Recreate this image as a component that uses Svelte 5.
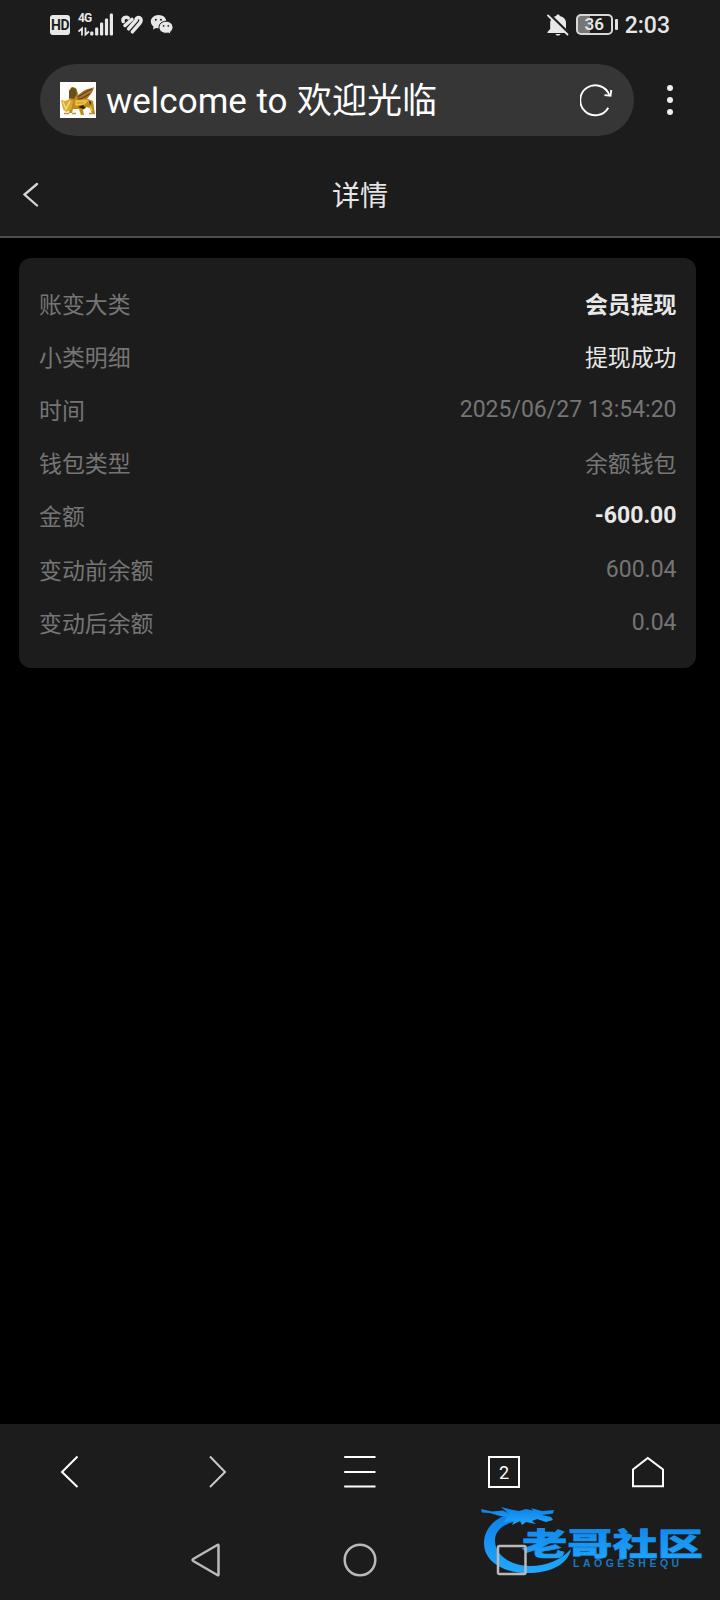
<script>
  const rows = [
    { label: '账变大类', value: '会员提现', type: 'strong' },
    { label: '小类明细', value: '提现成功', type: 'bright' },
    { label: '时间', value: '2025/06/27 13:54:20', type: 'num' },
    { label: '钱包类型', value: '余额钱包', type: '' },
    { label: '金额', value: '-600.00', type: 'strong num' },
    { label: '变动前余额', value: '600.04', type: 'num' },
    { label: '变动后余额', value: '0.04', type: 'num' }
  ];

  const signal = [4, 8, 13, 17, 22];
  let tabs = 2;
</script>

<div class="phone">
  <div class="status">
    <div class="status-left">
      <span class="hd">HD</span>
      <div class="signal">
        <span class="net">4G</span>
        <svg width="36" height="24" viewBox="0 0 36 24">
          <path d="M0.500 18.500L4 15.500V22.500M7.500 14.500V21.500L11 18.500" fill="none" stroke="#e8e8e8" stroke-width="1.800" />
          {#each signal as h, i}
            <rect x={12.2 + i * 4.9} y={22.5 - h} width="3.2" height={h} rx="1.2" fill="#e8e8e8" />
          {/each}
        </svg>
      </div>
      <svg class="health" width="24" height="22" viewBox="0 0 24 22">
        <g fill="none" stroke="#e8e8e8" stroke-width="3.500" stroke-linecap="round" stroke-linejoin="round">
          <path d="M3.200 7.500Q2.300 5 4.600 3.600Q6.600 2.600 8.300 4" />
          <path d="M5 11.500L12 5.300" />
          <path d="M8.600 14.800L16.300 6" />
          <path d="M16.300 4.500Q19 2.300 20.600 4.500Q21.800 6.800 20 9L12.300 17.800" />
        </g>
      </svg>
      <svg class="wechat" width="24" height="22" viewBox="0 0 24 22">
        <path d="M8.500 1C4 1 .8 4 .8 7.500c0 2.100 1 3.800 2.700 5L3 15.500l3-1.600c.8.2 1.600.3 2.500.3 4.600 0 7.800-3 7.800-6.700S13 1 8.500 1z" fill="#e8e8e8" />
        <path d="M16 7.300c-4 0-7 2.600-7 6s3 6 7 6c.9 0 1.700-.1 2.400-.3l2.400 1.400-.4-2.400c1.600-1.100 2.600-2.700 2.600-4.700 0-3.400-3-6-7-6z" fill="#e8e8e8" stroke="#1c1c1c" stroke-width="1" />
        <g fill="#1c1c1c">
          <circle cx="5.800" cy="5.800" r="1" /><circle cx="11" cy="5.800" r="1" />
          <circle cx="13.600" cy="11.800" r=".9" /><circle cx="18.300" cy="11.800" r=".9" />
        </g>
      </svg>
    </div>
    <div class="status-right">
      <svg width="24" height="24" viewBox="0 0 24 24">
        <path d="M12 1.500c-1 0-1.700.6-1.800 1.500C6 3.800 4.200 7 4.200 10v6L1.500 19v1h21v-1L20 16v-6c0-3.500-2.200-6.200-6.200-7-.1-.9-.8-1.500-1.800-1.500zM9.500 21h5c-.5 2-4.500 2-5 0z" fill="#e8e8e8" />
        <path d="M3.500 1.500L23 20.500" stroke="#1c1c1c" stroke-width="2.500" />
        <path d="M2 2.500L21.500 21.500" stroke="#e8e8e8" stroke-width="1.800" stroke-linecap="round" />
      </svg>
      <div class="battery"><span>36</span></div>
      <span class="clock">2:03</span>
    </div>
  </div>

  <div class="browser-bar">
    <div class="address">
      <svg class="favicon" width="36" height="36" viewBox="0 0 36 36">
        <rect width="36" height="36" fill="#fffefa" />
        <path d="M15 13c4 1 6-3 10-5 4-1.500 6-1.500 9-3-1 4-2 6-4 8l-3 4-6 1-5 1z" fill="#a8742f" />
        <path d="M17 15c5-1 8-6 15-8M18 17c6 0 8-4 12-5" stroke="#6d3f13" stroke-width="1.200" fill="none" />
        <path d="M9 9l3-4 4 1 2 5-1 7 11-1 5 2 1 7 1 6h-3l-2-6-4-1-3 3 1 5h-3l-2-6-6 0-1 4h-3l1-8-1-6z" fill="#c08a1c" />
        <path d="M9 9l3-4 4 2 1 5-3 5-5-1z" fill="#69501f" />
        <path d="M16 19l11 0-3 3-8 1zM29 20l3 9" stroke="#efc94a" stroke-width="1.300" fill="#dca827" />
        <path d="M18 25l5-2 3 3-3 1zM29 19l2 1-1 5z" fill="#332112" />
        <path d="M1 18l4 1 5-2 3 2-2 9-5 2-3-3z" fill="#d9a933" />
        <path d="M3 20l3 7 4-8" stroke="#f5dc77" stroke-width="1.500" fill="none" />
        <path d="M4 31.500h5M12 31.500h4M29 31.500h6" stroke="#b99347" stroke-width="1.500" />
      </svg>
      <span class="site">welcome to 欢迎光临</span>
      <svg class="refresh" width="34" height="34" viewBox="0 0 34 34" fill="none" stroke="#fff" stroke-width="1.900">
        <path d="M28.300 24.700A15 15 0 1 1 29.300 12" />
        <path d="M31.300 7L30.500 12.700L24.500 12.100" />
      </svg>
    </div>
    <div class="dots"><i></i><i></i><i></i></div>
  </div>

  <header>
    <svg width="20" height="26" viewBox="0 0 20 26">
      <path d="M17 3L4.500 13.500L17 24.500" fill="none" stroke="#d6d6d6" stroke-width="2.300" stroke-linecap="round" />
    </svg>
    <h1>详情</h1>
  </header>

  <main>
    <div class="card">
      {#each rows as row}
        <div class="row">
          <span class="label">{row.label}</span>
          <span class="value {row.type}">{row.value}</span>
        </div>
      {/each}
    </div>
  </main>

  <footer>
    <div class="toolbar">
      <svg width="36" height="36" viewBox="0 0 36 36"><path d="M23.500 2.500L8 18L23.500 33" /></svg>
      <svg class="dim" width="36" height="36" viewBox="0 0 36 36"><path d="M12 2.500L27 18L12 33" /></svg>
      <svg width="36" height="36" viewBox="0 0 36 36"><path d="M2.200 3H33.500M2.200 18H33.500M2.200 32.500H33.500" /></svg>
      <div class="tabs">{tabs}</div>
      <svg width="36" height="36" viewBox="0 0 36 36"><path d="M3 32.300V15.500L17.800 4L33 15.500V32.300Z" /></svg>
    </div>

    <div class="watermark">
      <svg width="240" height="80" viewBox="0 0 240 80">
        <defs>
          <linearGradient id="blue" x1="0" y1="0" x2="0" y2="1">
            <stop offset="0" stop-color="#0b7fe8" />
            <stop offset="1" stop-color="#22a8fa" />
          </linearGradient>
        </defs>
        <g fill="url(#blue)">
          <path d="M44 12C22 14 8 27 8 43C8 62 28 73 52 73C73 73 92 65 95 49C86 59 72 66 54 66C34 66 20 55 19 42C18 31 28 22 44 21Z" />
          <path d="M5 9L16 11.500L27 10.500L32 13L25 7L35 9.500L43 11L50 9L57 10.500L55 8L66 11L78 10L77 13.500L66 15L75 17L77 20L70 22L61 19L56 21L60 24L50 22L46 25L44 21L36 25L38 21L28 22L31 17L22 15.500L14 13L6 12.500Z" />
        </g>
        <text class="wm-title" x="46" y="54.500" textLength="181" lengthAdjust="spacingAndGlyphs" fill="url(#blue)">老哥社区</text>
      </svg>
      <span class="wm-sub">LAOGESHEQU</span>
    </div>

    <div class="system-nav">
      <svg width="36" height="36" viewBox="0 0 36 36"><path d="M29.500 3.500V32.500Q29.500 33.800 28.300 33L4.200 19Q2.800 18 4.200 17L28.300 3Q29.500 2.300 29.500 3.500Z" /></svg>
      <svg width="36" height="36" viewBox="0 0 36 36"><circle cx="18" cy="18" r="15.300" /></svg>
      <svg width="36" height="36" viewBox="0 0 36 36"><rect x="3" y="4" width="27.500" height="28" rx="1.500" /></svg>
    </div>
  </footer>
</div>

<style>
  :global(body) {
    margin: 0;
    background: #000;
  }

  .phone {
    width: 720px;
    height: 1600px;
    display: flex;
    flex-direction: column;
    overflow: hidden;
    background: #000;
    color: #e6e6e6;
    font-family: Roboto, "Noto Sans CJK SC", sans-serif;
  }

  svg {
    display: block;
    flex: none;
  }

  .status {
    height: 48px;
    box-sizing: border-box;
    display: flex;
    justify-content: space-between;
    align-items: center;
    padding: 1px 50px 0;
    background: #1c1c1c;
  }

  .status-left,
  .status-right {
    display: flex;
    align-items: center;
  }

  .hd {
    width: 20px;
    height: 20px;
    margin-right: 8px;
    border-radius: 3px;
    background: #e8e8e8;
    color: #1c1c1c;
    font-size: 14px;
    font-weight: 700;
    line-height: 21px;
    text-align: center;
    letter-spacing: -0.5px;
  }

  .signal {
    position: relative;
  }

  .net {
    position: absolute;
    top: -2px;
    left: 0;
    font-size: 12px;
    font-weight: 700;
    line-height: 15px;
    letter-spacing: -1px;
  }

  .health {
    margin-left: 6px;
  }

  .wechat {
    margin-left: 6px;
  }

  .battery {
    position: relative;
    width: 37px;
    height: 21px;
    box-sizing: border-box;
    margin: 0 12px 0 6px;
    border: 2px solid #d8d8d8;
    border-radius: 5px;
    background: linear-gradient(90deg, #767676 36%, #1c1c1c 36%);
    font-size: 17px;
    font-weight: 600;
    line-height: 17px;
    text-align: center;
  }

  .battery::after {
    content: '';
    position: absolute;
    top: 3px;
    right: -7px;
    width: 2.5px;
    height: 11px;
    border-radius: 1px;
    background: #e0e0e0;
  }

  .clock {
    font-size: 23px;
    font-weight: 500;
    line-height: 26px;
    padding-top: 2px;
  }

  .browser-bar {
    height: 104px;
    box-sizing: border-box;
    display: flex;
    align-items: center;
    padding: 0 40px;
    background: #1c1c1c;
  }

  .address {
    width: 594px;
    height: 72px;
    box-sizing: border-box;
    display: flex;
    align-items: center;
    padding: 0 20px;
    border-radius: 36px;
    background: #363636;
    color: #fff;
  }

  .site {
    flex: 1;
    margin-left: 10px;
    padding-top: 4px;
    font-size: 35px;
    line-height: 44px;
    word-spacing: 0.8px;
    white-space: nowrap;
  }

  .dots {
    display: flex;
    flex-direction: column;
    gap: 6px;
    margin-left: 33px;
  }

  .dots i {
    width: 6px;
    height: 6px;
    border-radius: 50%;
    background: #ededed;
  }

  header {
    height: 86px;
    box-sizing: border-box;
    display: grid;
    grid-template-columns: 40px 1fr 40px;
    align-items: center;
    padding: 0 20px;
    border-bottom: 2px solid #4c4c4c;
    background: #1c1c1c;
  }

  h1 {
    margin: 0;
    padding-top: 5px;
    font-size: 28px;
    font-weight: 400;
    line-height: 40px;
    text-align: center;
  }

  main {
    flex: 1;
    padding: 20px 24px 0 19px;
  }

  .card {
    height: 410px;
    box-sizing: border-box;
    padding: 21.5px 19.5px 0 20px;
    border-radius: 12px;
    background: #1c1c1c;
  }

  .row {
    height: 53.1px;
    display: flex;
    justify-content: space-between;
    align-items: center;
    color: #757575;
    font-size: 22.9px;
    line-height: 34px;
  }

  .num {
    padding-bottom: 4px;
    font-size: 23px;
  }

  .strong,
  .bright {
    color: #e8e8e8;
  }

  .strong {
    font-weight: 700;
  }

  footer {
    position: relative;
    height: 176px;
    background: #1c1c1c;
  }

  .toolbar {
    height: 96px;
    display: grid;
    grid-template-columns: repeat(5, 1fr);
    align-items: center;
    justify-items: center;
    fill: none;
    stroke: #fff;
    stroke-width: 2;
  }

  .dim {
    stroke: #c8c8c8;
  }

  .tabs {
    width: 32px;
    height: 32px;
    box-sizing: border-box;
    border: 2px solid #fff;
    color: #fff;
    font-size: 18px;
    line-height: 29px;
    text-align: center;
  }

  .system-nav {
    position: relative;
    height: 80px;
    display: flex;
    justify-content: center;
    align-items: center;
    gap: 117px;
    fill: none;
    stroke: #b9b9b9;
    stroke-width: 2.5;
  }

  /* sits between the bar background and the system buttons */
  .watermark {
    position: absolute;
    top: 76px;
    left: 476px;
  }

  .wm-title {
    font-family: "Noto Sans CJK SC", sans-serif;
    font-size: 31px;
    font-weight: 900;
    stroke: #1795f2;
    stroke-width: 0.6;
  }

  .wm-sub {
    position: absolute;
    top: 58px;
    left: 97px;
    color: #1b78bd;
    font-family: "Liberation Sans", sans-serif;
    font-size: 10.5px;
    line-height: 11px;
    font-weight: 700;
    letter-spacing: 3.5px;
  }
</style>
